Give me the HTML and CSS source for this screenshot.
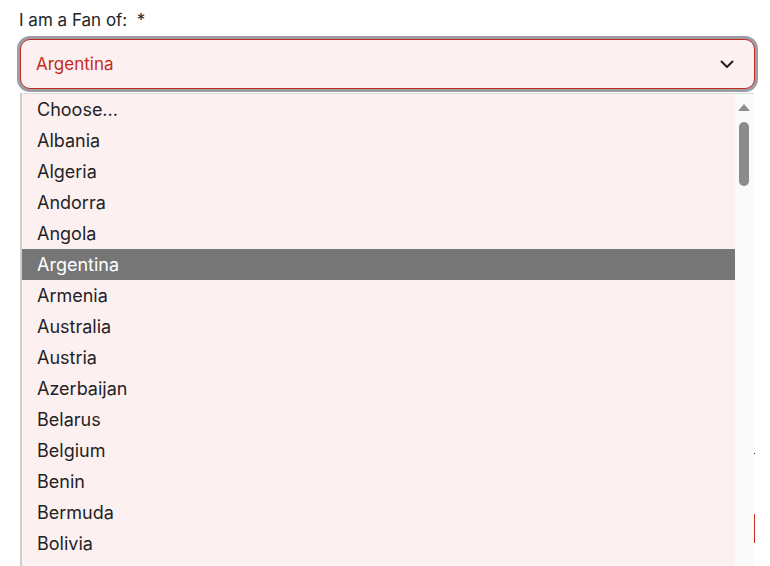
FILE: index.html
```html
<!DOCTYPE html>
<html lang="en">
<head>
<meta charset="utf-8">
<title>Fan form</title>
<link rel="stylesheet" href="styles.css">
</head>
<body>
<form class="form">
  <div class="field">
    <label class="label">I am a Fan of:&nbsp; *</label>
    <div class="select">
      <span class="select-value">Argentina</span>
      <svg class="chevron" width="14" height="9" viewBox="0 0 14 9"><path d="M1.5 1.5 L7 7 L12.5 1.5" fill="none" stroke="#222" stroke-width="2" stroke-linecap="round" stroke-linejoin="round"/></svg>
    </div>
    <div class="dropdown">
      <ul class="options">
        <li>Choose...</li>
        <li>Albania</li>
        <li>Algeria</li>
        <li>Andorra</li>
        <li>Angola</li>
        <li class="selected">Argentina</li>
        <li>Armenia</li>
        <li>Australia</li>
        <li>Austria</li>
        <li>Azerbaijan</li>
        <li>Belarus</li>
        <li>Belgium</li>
        <li>Benin</li>
        <li>Bermuda</li>
        <li>Bolivia</li>
      </ul>
      <div class="scrollbar">
        <div class="arrow-up"></div>
        <div class="thumb"></div>
      </div>
    </div>
  </div>
  <div class="under">
    <div class="under-dot"></div>
    <div class="under-box"></div>
  </div>
</form>
</body>
</html>
```

FILE: styles.css
```css
html, body {
  margin: 0;
  padding: 0;
  background: #ffffff;
}
body {
  font-family: Inter, "Liberation Sans", sans-serif;
  color: #212529;
  width: 770px;
  height: 566px;
  overflow: hidden;
}
.form {
  padding: 10px 15px 0 20px;
  position: relative;
}
.field {
  position: relative;
}
.label {
  display: block;
  font-size: 17px;
  line-height: 20px;
  margin-left: -1px;
  margin-bottom: 9px;
  color: #212529;
}
.select {
  box-sizing: border-box;
  height: 50px;
  width: 735px;
  border: 1px solid #c42b1c;
  border-radius: 10px;
  background: #fcf1f0;
  box-shadow: 0 0 0 3px #9d9da6;
  display: flex;
  align-items: center;
  justify-content: space-between;
  padding: 0 20px 0 15px;
}
.select-value {
  color: #c42b1c;
  font-size: 17px;
}
.chevron {
  display: block;
  margin-top: 1px;
}
.dropdown {
  position: absolute;
  left: 0;
  top: 83px;
  width: 734px;
  height: 480px;
  box-sizing: border-box;
  border-left: 2px solid #cfcfcf;
  border-top: 1px solid #dddddd;
  background: #fcf1f0;
  display: flex;
  z-index: 2;
}
.options {
  list-style: none;
  margin: 0;
  padding: 0;
  flex: 1;
}
.options li {
  height: 31px;
  line-height: 32px;
  padding-left: 15px;
  font-size: 18px;
  color: #1f2327;
}
.options li.selected {
  background: #767676;
  color: #ffffff;
}
.scrollbar {
  width: 19px;
  background: #fafafa;
  position: relative;
}
.arrow-up {
  width: 0;
  height: 0;
  margin: 10px auto 0;
  border-left: 6px solid transparent;
  border-right: 6px solid transparent;
  border-bottom: 7px solid #8c8c8c;
  transform: translateX(-1px);
}
.thumb {
  width: 10px;
  height: 64px;
  margin: 11px 0 0 4px;
  border-radius: 5px;
  background: #8c8c8c;
}
.under {
  position: relative;
  height: 400px;
}
.under-dot {
  position: absolute;
  left: 734px;
  top: 364px;
  width: 1px;
  height: 1px;
  background: #333;
}
.under-box {
  position: absolute;
  left: 733px;
  top: 425px;
  width: 2px;
  height: 29px;
  background: #c42b1c;
}
```
